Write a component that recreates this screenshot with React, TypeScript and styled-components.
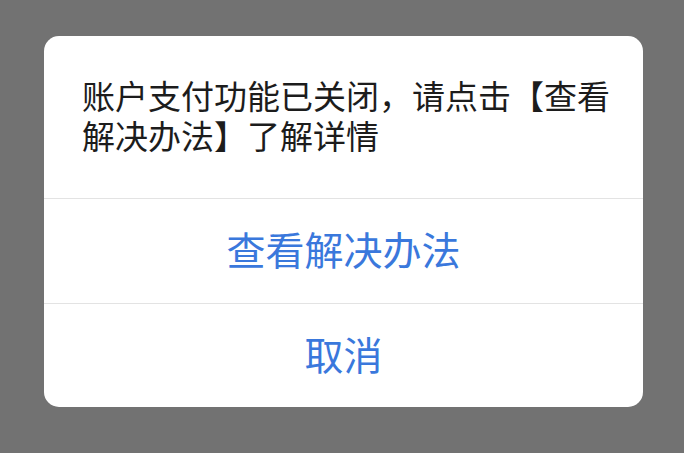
import React from 'react';
import styled, { createGlobalStyle } from 'styled-components';

const GlobalStyle = createGlobalStyle`
  html, body {
    margin: 0;
    padding: 0;
    background: #727272;
  }
  body {
    font-family: "Noto Sans CJK SC", "Noto Sans", sans-serif;
  }
`;

const Page = styled.div`
  width: 684px;
  height: 453px;
  box-sizing: border-box;
  padding: 36px 0 0 44px;
  background: #727272;
`;

const Dialog = styled.div`
  width: 599px;
  background: #ffffff;
  border-radius: 15px;
  overflow: hidden;
  display: flex;
  flex-direction: column;
`;

const Message = styled.div`
  height: 162px;
  box-sizing: border-box;
  padding: 39px 32px 0 38px;
  font-size: 33px;
  line-height: 40px;
  color: #1c1c1c;
`;

const Action = styled.button<{ $height: number }>`
  height: ${(p) => p.$height}px;
  box-sizing: border-box;
  border: none;
  border-top: 1px solid #e3e3e3;
  background: transparent;
  padding: 0 0 6px;
  font-family: inherit;
  font-size: 39px;
  color: #3a78dc;
  display: flex;
  align-items: center;
  justify-content: center;
  cursor: pointer;
`;

const App: React.FC = () => (
  <Page>
    <GlobalStyle />
    <Dialog>
      <Message>账户支付功能已关闭，请点击【查看解决办法】了解详情</Message>
      <Action $height={105}>查看解决办法</Action>
      <Action $height={104}>取消</Action>
    </Dialog>
  </Page>
);

export default App;
